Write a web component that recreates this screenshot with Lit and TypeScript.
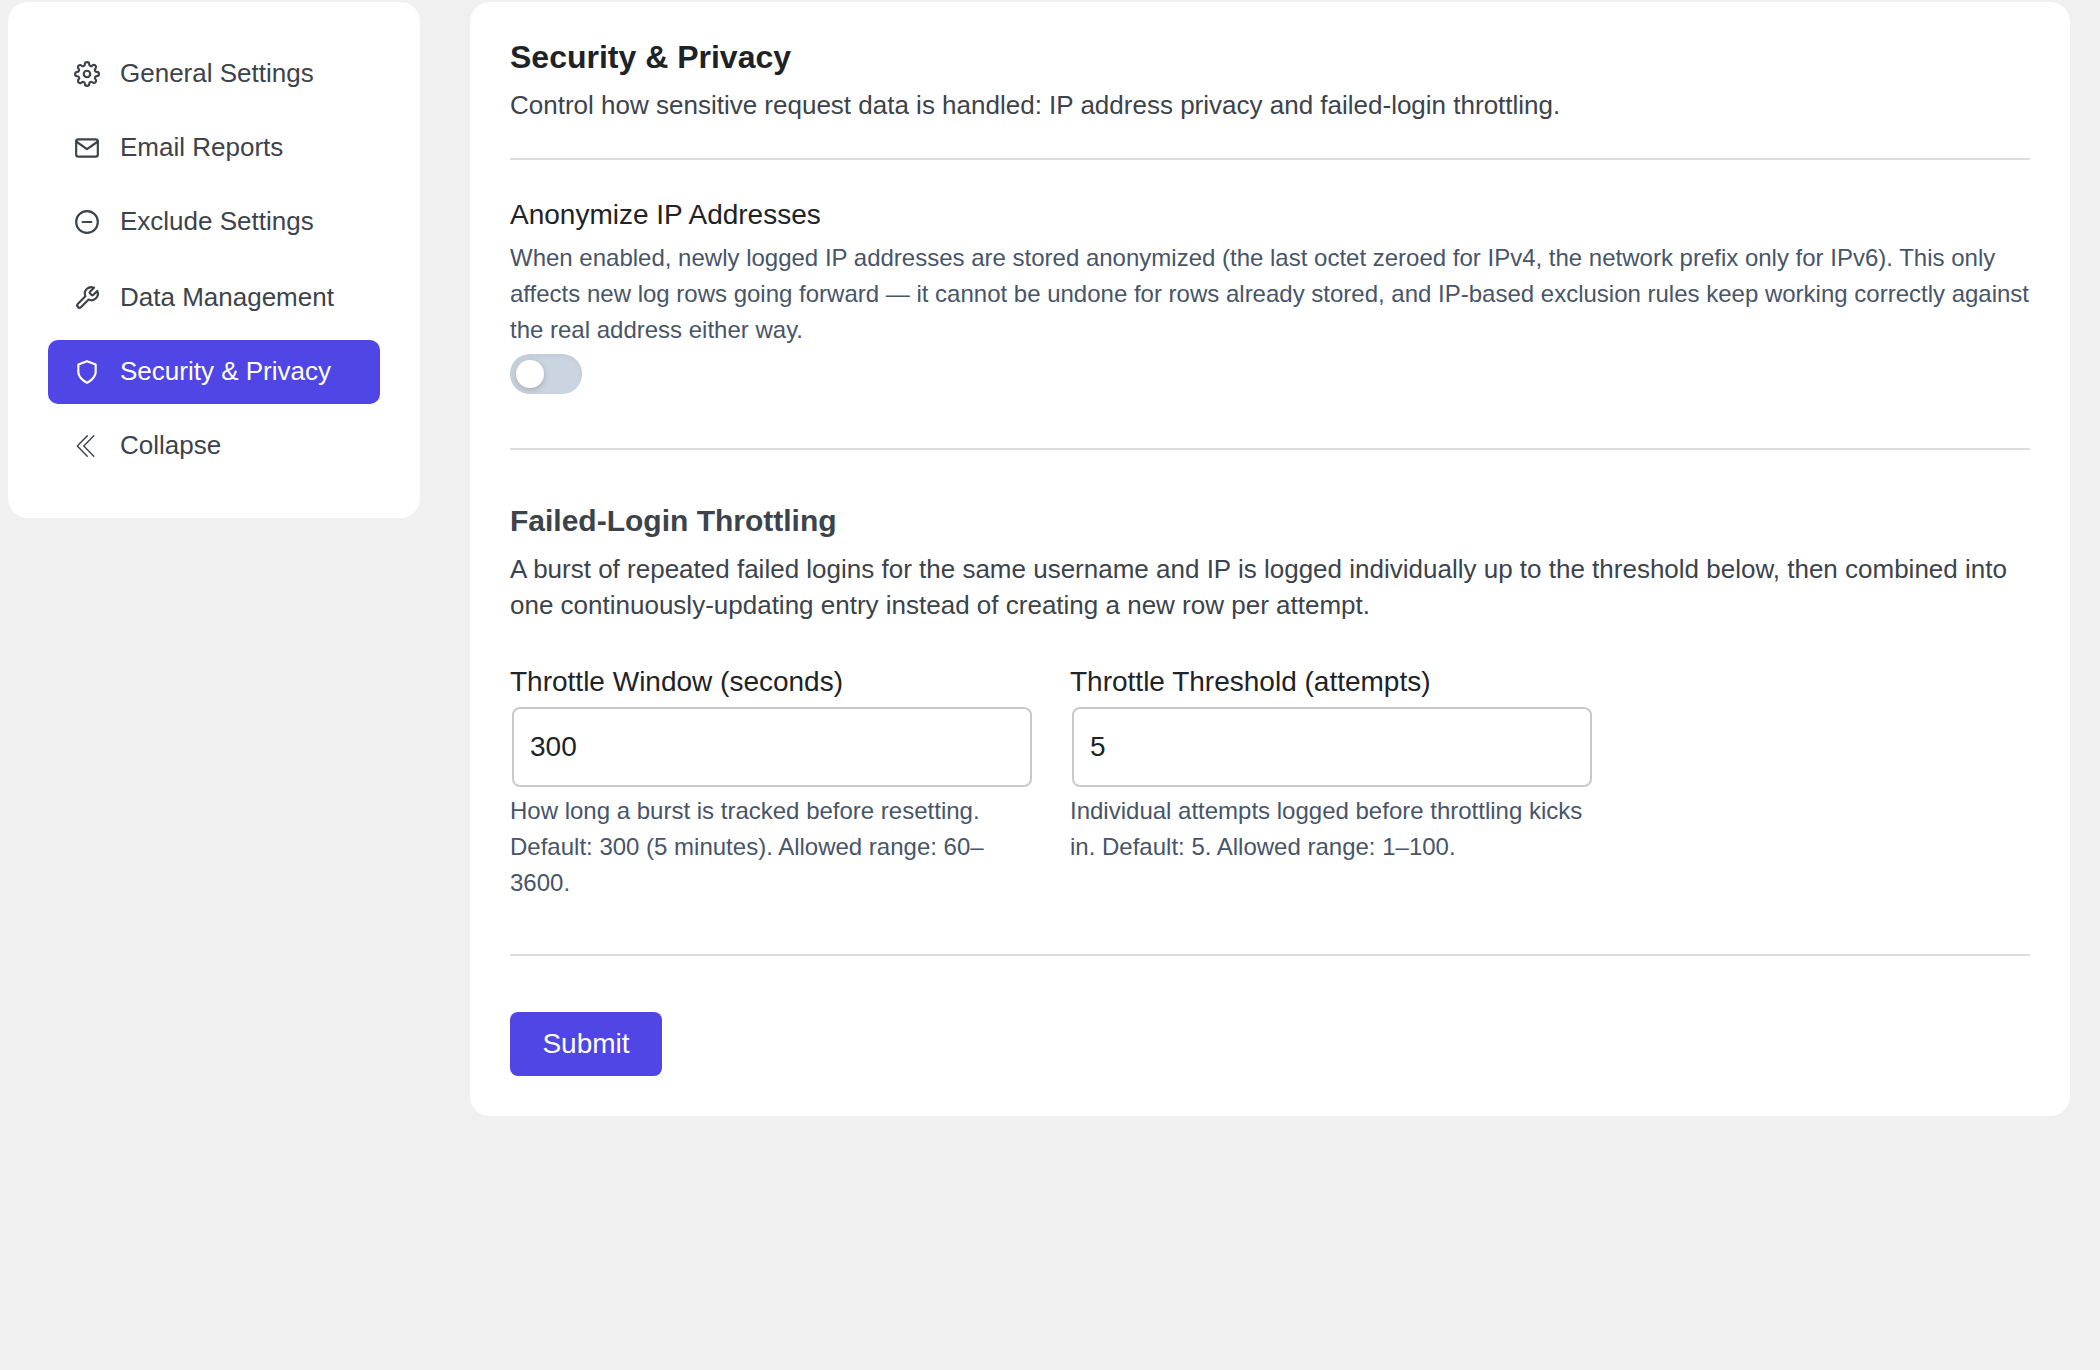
import { LitElement, html, css, svg } from "lit";
import { customElement, state } from "lit/decorators.js";
import { classMap } from "lit/directives/class-map.js";

const gear = svg`<circle cx="12" cy="12" r="3"/><path d="M19.4 15a1.65 1.65 0 0 0 .33 1.82l.06.06a2 2 0 0 1 0 2.83 2 2 0 0 1-2.83 0l-.06-.06a1.65 1.65 0 0 0-1.82-.33 1.65 1.65 0 0 0-1 1.51V21a2 2 0 0 1-2 2 2 2 0 0 1-2-2v-.09A1.65 1.65 0 0 0 9 19.4a1.65 1.65 0 0 0-1.82.33l-.06.06a2 2 0 0 1-2.83 0 2 2 0 0 1 0-2.83l.06-.06a1.65 1.65 0 0 0 .33-1.82 1.65 1.65 0 0 0-1.51-1H3a2 2 0 0 1-2-2 2 2 0 0 1 2-2h.09A1.65 1.65 0 0 0 4.6 9a1.65 1.65 0 0 0-.33-1.82l-.06-.06a2 2 0 0 1 0-2.83 2 2 0 0 1 2.83 0l.06.06a1.65 1.65 0 0 0 1.82.33H9a1.65 1.65 0 0 0 1-1.51V3a2 2 0 0 1 2-2 2 2 0 0 1 2 2v.09a1.65 1.65 0 0 0 1 1.51 1.65 1.65 0 0 0 1.82-.33l.06-.06a2 2 0 0 1 2.83 0 2 2 0 0 1 0 2.83l-.06.06a1.65 1.65 0 0 0-.33 1.82V9a1.65 1.65 0 0 0 1.51 1H21a2 2 0 0 1 2 2 2 2 0 0 1-2 2h-.09a1.65 1.65 0 0 0-1.51 1z"/>`;
const mail = svg`<path d="M4 4h16c1.100 0 2 .9 2 2v12c0 1.100-.9 2-2 2H4c-1.100 0-2-.9-2-2V6c0-1.100.9-2 2-2z"/><path d="M22 6l-10 7L2 6"/>`;
const minus = svg`<circle cx="12" cy="12" r="10"/><path d="M8 12h8"/>`;
const wrench = svg`<path d="M14.700 6.300a1 1 0 0 0 0 1.400l1.600 1.600a1 1 0 0 0 1.400 0l3.770-3.770a6 6 0 0 1-7.940 7.940l-6.910 6.910a2.120 2.120 0 0 1-3-3l6.910-6.910a6 6 0 0 1 7.940-7.940l-3.760 3.760z"/>`;
const shield = svg`<path d="M12 22s8-4 8-10V5l-8-3-8 3v7c0 6 8 10 8 10z"/>`;
const collapse = svg`<path d="M12.300 2.600 3 12l9.300 9.400M18.300 2.600 9 12l9.300 9.400"/>`;

const NAV = [
  [
    { label: "General Settings", icon: gear },
    { label: "Email Reports", icon: mail },
    { label: "Exclude Settings", icon: minus },
  ],
  [
    { label: "Data Management", icon: wrench },
    { label: "Security & Privacy", icon: shield },
    { label: "Collapse", icon: collapse, thin: true },
  ],
];

@customElement("settings-nav")
export class SettingsNav extends LitElement {
  @state() private active = "Security & Privacy";

  static styles = css`
    :host { display: block; }
    .nav {
      display: flex;
      flex-direction: column;
      gap: 12px;
      padding: 40px;
      border-radius: 20px;
      background: #fff;
    }
    .group {
      display: flex;
      flex-direction: column;
      gap: 10px;
      margin: 0;
      padding: 0;
      list-style: none;
    }
    .link {
      display: flex;
      align-items: center;
      gap: 20px;
      box-sizing: border-box;
      height: 64px;
      padding: 0 26px;
      border-radius: 10px;
      color: #3c434a;
      font-size: 26px;
      line-height: 36px;
      text-decoration: none;
      white-space: nowrap;
    }
    .link.active { background: #4f46e5; color: #fff; }
    .label { padding-bottom: 2px; }
    .icon {
      flex: none;
      width: 26px;
      height: 26px;
      overflow: visible;
      fill: none;
      stroke: currentColor;
      stroke-width: 2;
      stroke-linecap: round;
      stroke-linejoin: round;
    }
    .icon.thin { stroke-width: 1.3; }
  `;

  private pick(event: Event, label: string) {
    event.preventDefault();
    if (label !== "Collapse") this.active = label;
  }

  render() {
    return html`
      <nav class="nav" aria-label="Settings">
        ${NAV.map(
          (group) => html`<ul class="group">
            ${group.map(
              (item) => html`<li>
                <a
                  class=${classMap({ link: true, active: item.label === this.active })}
                  href="#"
                  @click=${(e: Event) => this.pick(e, item.label)}
                >
                  <svg
                    class=${classMap({ icon: true, thin: "thin" in item })}
                    viewBox="0 0 24 24"
                    aria-hidden="true"
                  >${item.icon}</svg>
                  <span class="label">${item.label}</span>
                </a>
              </li>`
            )}
          </ul>`
        )}
      </nav>
    `;
  }
}

@customElement("app-root")
export class AppRoot extends LitElement {
  static styles = css`
    :host {
      display: block;
      box-sizing: border-box;
      min-height: 100vh;
      padding: 2px 30px 40px 8px;
      background: #f0f0f0;
      color: #1d2327;
      font-family: "Liberation Sans", Arial, sans-serif;
    }
    .layout {
      display: grid;
      grid-template-columns: 412px minmax(0, 1fr);
      align-items: start;
      gap: 50px;
    }
    .card {
      padding: 40px;
      border-radius: 20px;
      background: #fff;
    }
    .title, .subtitle, .text, .help { margin: 0; }
    .title { font-size: 32px; line-height: 30px; }
    .subtitle { color: #3c434a; font-size: 30px; line-height: 30px; }
    .text {
      padding-top: 15px;
      color: #3c434a;
      font-size: 26px;
      line-height: 36px;
    }
    .rule {
      height: 2px;
      margin: 0;
      border: 0;
      background: #dcdcde;
    }
    .section { padding: 36px 0 54px; }
    .section.intro { padding: 0 0 35px; }
    .section.throttle { padding: 56px 0 53px; }
    .label {
      display: block;
      margin-bottom: 6px;
      font-size: 28px;
      line-height: 38px;
    }
    .help { color: #475569; font-size: 24px; line-height: 36px; }
    .toggle {
      appearance: none;
      display: flex;
      align-items: center;
      box-sizing: border-box;
      width: 72px;
      height: 40px;
      margin: 6px 0 0;
      padding: 6px;
      border-radius: 20px;
      background: #cbd5e1;
      box-shadow: inset 0 2px 4px rgba(0, 0, 0, 0.06);
      cursor: pointer;
    }
    .toggle::before {
      content: "";
      width: 28px;
      height: 28px;
      border-radius: 50%;
      background: #fff;
      box-shadow: 0 2px 6px rgba(0, 0, 0, 0.2);
    }
    .toggle:checked { justify-content: flex-end; background: #4f46e5; }
    .fields {
      display: grid;
      grid-template-columns: repeat(2, minmax(0, 522px));
      gap: 38px;
      padding-top: 40px;
    }
    .input {
      appearance: none;
      -moz-appearance: textfield;
      display: block;
      box-sizing: border-box;
      width: calc(100% - 2px);
      height: 80px;
      margin: 0 0 6px 2px;
      padding: 0 16px;
      border: 2px solid #c9c9cb;
      border-radius: 8px;
      background: #fff;
      color: #1d2327;
      font-family: inherit;
      font-size: 28px;
    }
    .input::-webkit-inner-spin-button { appearance: none; margin: 0; }
    .submit {
      display: block;
      min-width: 152px;
      height: 64px;
      margin-top: 56px;
      padding: 0 32px;
      border: 0;
      border-radius: 8px;
      background: #4f46e5;
      color: #fff;
      font-family: inherit;
      font-size: 28px;
      cursor: pointer;
    }
  `;

  render() {
    return html`
      <div class="layout">
        <settings-nav></settings-nav>
        <main class="card">
          <form @submit=${(e: Event) => e.preventDefault()}>
            <section class="section intro">
              <h1 class="title">Security &amp; Privacy</h1>
              <p class="text">Control how sensitive request data is handled: IP address privacy and failed-login throttling.</p>
            </section>
            <hr class="rule" />
            <section class="section">
              <label class="label" for="anonymize">Anonymize IP Addresses</label>
              <p class="help" id="anonymize-help">When enabled, newly logged IP addresses are stored anonymized (the last octet zeroed for IPv4, the network prefix only for IPv6). This only affects new log rows going forward — it cannot be undone for rows already stored, and IP-based exclusion rules keep working correctly against the real address either way.</p>
              <input class="toggle" id="anonymize" type="checkbox" role="switch" aria-describedby="anonymize-help" />
            </section>
            <hr class="rule" />
            <section class="section throttle">
              <h2 class="subtitle">Failed-Login Throttling</h2>
              <p class="text">A burst of repeated failed logins for the same username and IP is logged individually up to the threshold below, then combined into one continuously-updating entry instead of creating a new row per attempt.</p>
              <div class="fields">
                <div>
                  <label class="label" for="window">Throttle Window (seconds)</label>
                  <input class="input" id="window" type="number" min="60" max="3600" value="300" aria-describedby="window-help" />
                  <p class="help" id="window-help">How long a burst is tracked before resetting. Default: 300 (5 minutes). Allowed range: 60–3600.</p>
                </div>
                <div>
                  <label class="label" for="threshold">Throttle Threshold (attempts)</label>
                  <input class="input" id="threshold" type="number" min="1" max="100" value="5" aria-describedby="threshold-help" />
                  <p class="help" id="threshold-help">Individual attempts logged before throttling kicks in. Default: 5. Allowed range: 1–100.</p>
                </div>
              </div>
            </section>
            <hr class="rule" />
            <button class="submit" type="submit">Submit</button>
          </form>
        </main>
      </div>
    `;
  }
}
